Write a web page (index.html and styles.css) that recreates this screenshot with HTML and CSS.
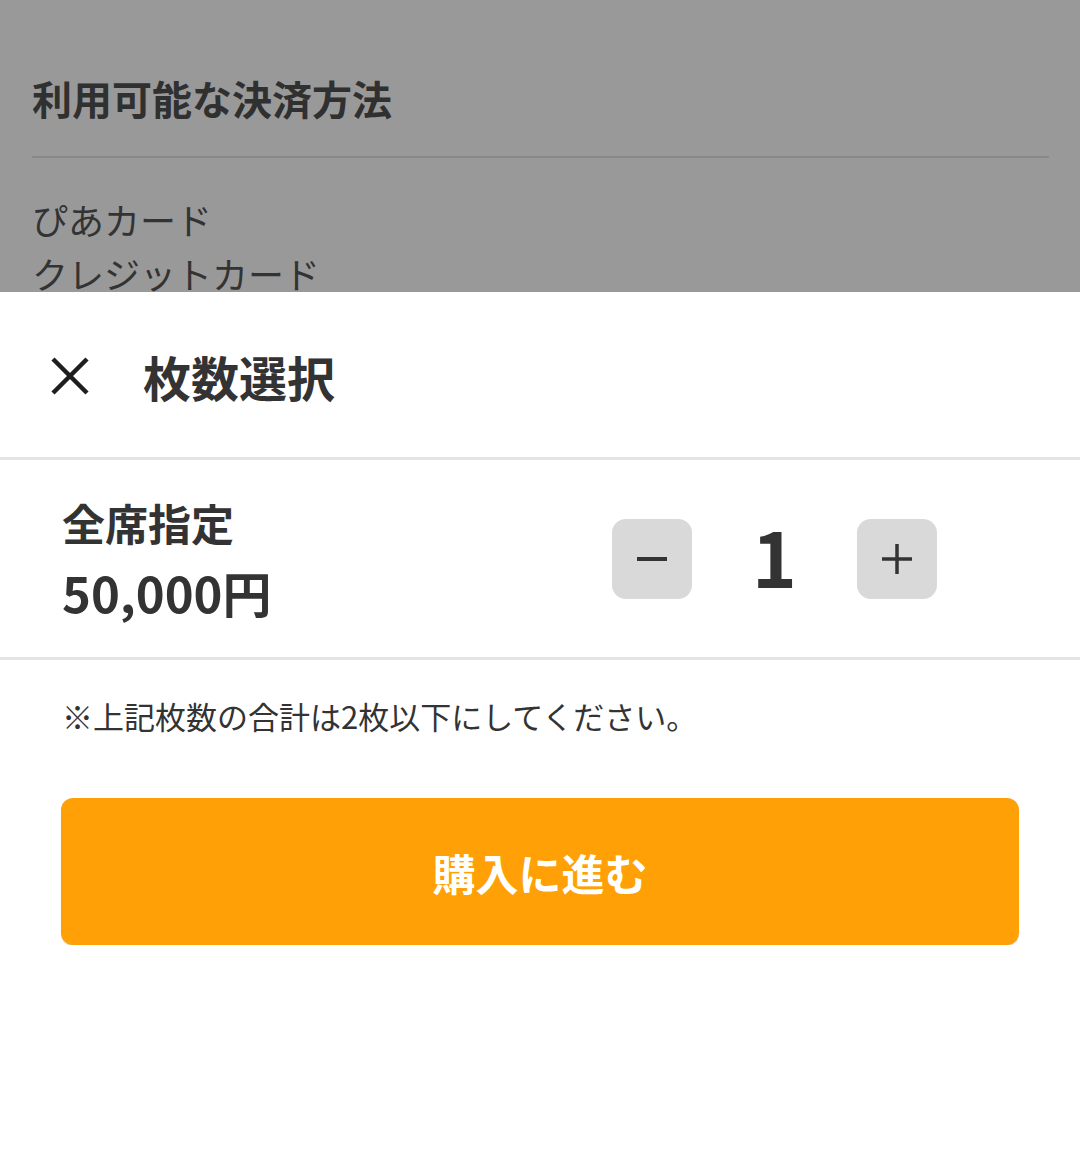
FILE: index.html
```html
<!DOCTYPE html>
<html lang="ja">
<head>
<meta charset="utf-8">
<title>枚数選択</title>
<link rel="stylesheet" href="styles.css">
</head>
<body>
<div class="backdrop">
  <h2 class="bd-title">利用可能な決済方法</h2>
  <hr class="bd-rule">
  <ul class="bd-list">
    <li>ぴあカード</li>
    <li>クレジットカード</li>
  </ul>
</div>
<div class="sheet">
  <header class="sheet-head">
    <button class="close" aria-label="閉じる">
      <svg width="40" height="40" viewBox="0 0 40 40"><path d="M3 3 L37 37 M37 3 L3 37" stroke="#1e1e1e" stroke-width="4.5" fill="none"/></svg>
    </button>
    <h1 class="sheet-title">枚数選択</h1>
  </header>
  <div class="ticket-row">
    <div class="ticket-info">
      <div class="ticket-name">全席指定</div>
      <div class="ticket-price">50,000円</div>
    </div>
    <div class="stepper">
      <button class="step-btn" aria-label="減らす">
        <svg width="32" height="32" viewBox="0 0 32 32"><path d="M1 16 H31" stroke="#333" stroke-width="4"/></svg>
      </button>
      <div class="count">1</div>
      <button class="step-btn" aria-label="増やす">
        <svg width="32" height="32" viewBox="0 0 32 32"><path d="M1 16 H31 M16 1 V31" stroke="#333" stroke-width="3.5"/></svg>
      </button>
    </div>
  </div>
  <p class="note">※上記枚数の合計は2枚以下にしてください。</p>
  <button class="buy">購入に進む</button>
</div>
</body>
</html>
```

FILE: styles.css
```css
* { box-sizing: border-box; }
html, body {
  margin: 0;
  padding: 0;
  background: #fff;
  font-family: "Noto Sans CJK JP", "Noto Sans", sans-serif;
  color: #333;
}
.backdrop {
  height: 292px;
  overflow: hidden;
  background: #999999;
  padding: 78px 31px 0 32px;
}
.bd-title {
  margin: 0;
  font-size: 40px;
  line-height: 40px;
  font-weight: 700;
  color: #303030;
}
.bd-rule {
  margin: 38px 0 0;
  border: 0;
  height: 2px;
  background: #888;
}
.bd-list {
  list-style: none;
  margin: 34px 0 0;
  padding: 0;
  font-size: 36px;
  line-height: 54px;
  color: #333;
}
.sheet {
  background: #fff;
}
.sheet-head {
  height: 168px;
  display: flex;
  align-items: center;
  padding: 2px 0 0 50px;
  border-bottom: 3px solid #e5e5e5;
  gap: 53px;
}
.close {
  border: 0;
  background: none;
  padding: 0;
  width: 40px;
  height: 40px;
  display: block;
}
.close svg { display: block; }
.sheet-title {
  margin: 0;
  font-size: 48px;
  line-height: 48px;
  font-weight: 700;
  color: #333;
}
.ticket-row {
  height: 200px;
  display: flex;
  align-items: center;
  justify-content: space-between;
  padding: 0 143px 0 62px;
  border-bottom: 3px solid #e5e5e5;
}
.ticket-info {
  display: flex;
  flex-direction: column;
  gap: 23px;
}
.ticket-name {
  font-size: 43px;
  line-height: 43px;
  font-weight: 700;
}
.ticket-price {
  font-size: 49px;
  line-height: 49px;
  font-weight: 700;
}
.stepper {
  display: flex;
  align-items: center;
}
.step-btn {
  width: 80px;
  height: 80px;
  border: 0;
  border-radius: 14px;
  background: #d9d9d9;
  padding: 0;
  display: flex;
  align-items: center;
  justify-content: center;
}
.step-btn svg { display: block; }
.count {
  width: 165px;
  text-align: center;
  font-size: 76px;
  line-height: 76px;
  font-weight: 700;
  color: #333;
  margin-top: -8px;
}
.note {
  margin: 40px 0 0 62px;
  font-size: 31px;
  line-height: 31px;
  color: #333;
}
.buy {
  display: block;
  margin: 67px 0 0 61px;
  width: 958px;
  height: 147px;
  border: 0;
  border-radius: 12px;
  background: #ffa007;
  box-shadow: 0 1px 1px rgba(0,0,0,0.12);
  color: #fff;
  font-family: "Noto Sans CJK JP", sans-serif;
  font-size: 43px;
  font-weight: 700;
  padding: 0;
}
```
